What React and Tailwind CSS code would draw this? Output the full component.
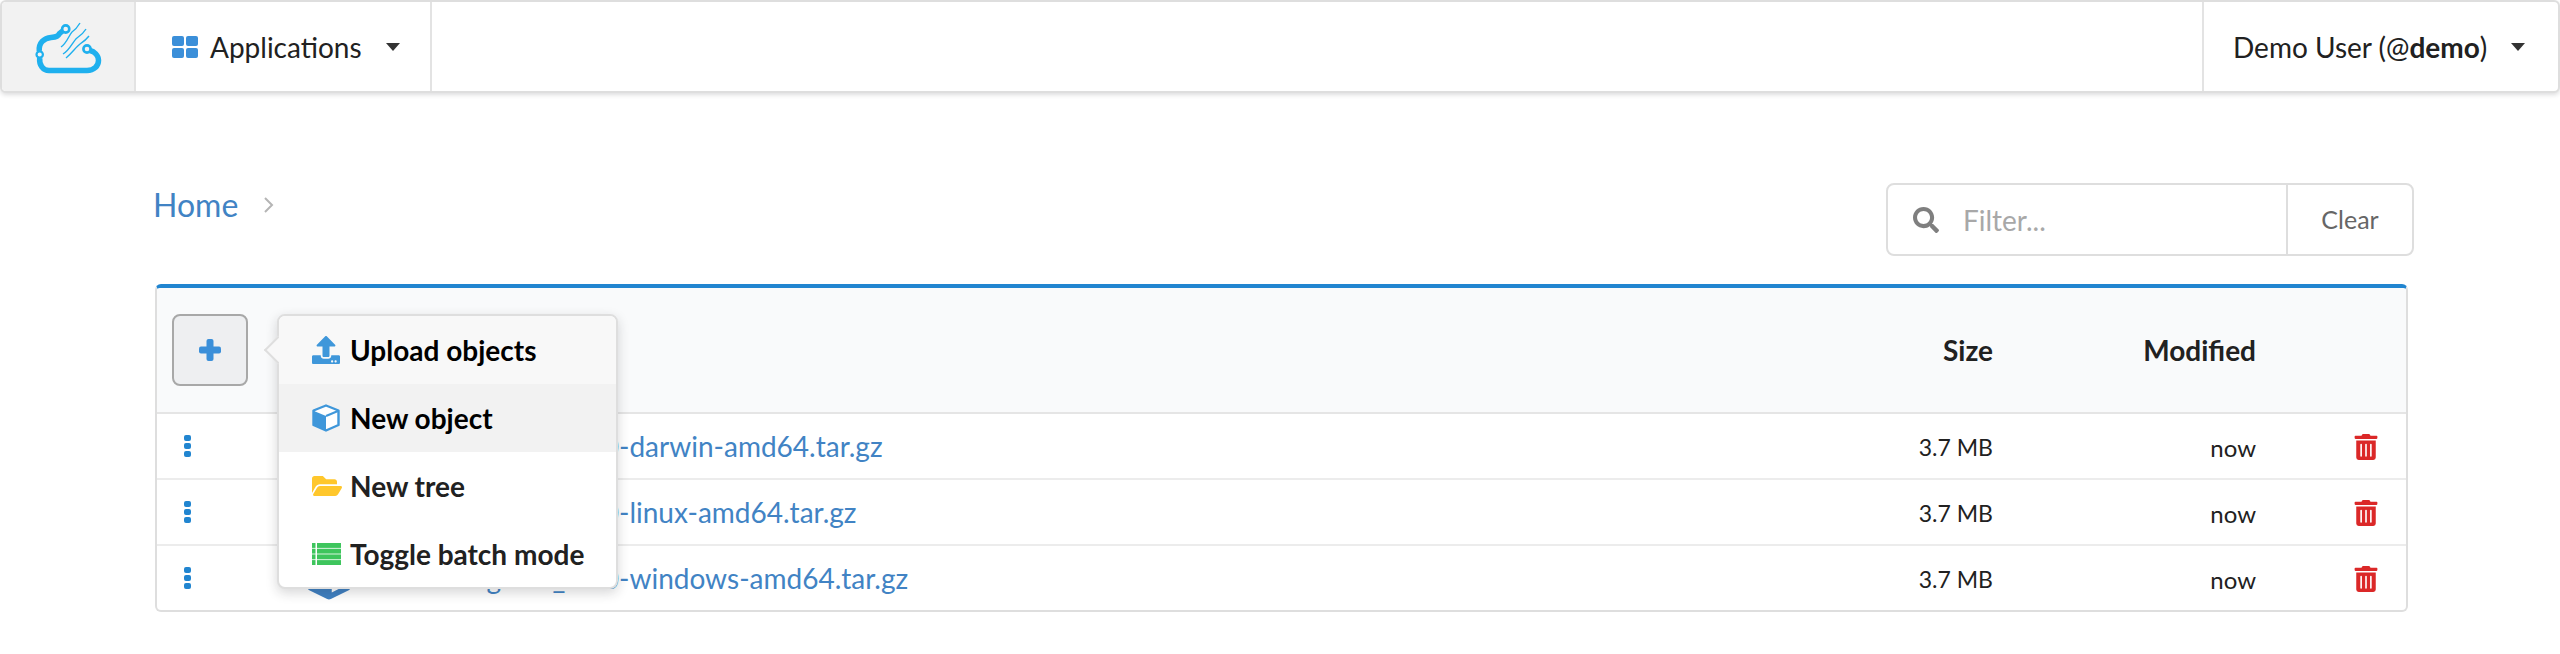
import React from "react";
import { FaSearch, FaTrashAlt, FaUpload, FaCube, FaFolderOpen } from "react-icons/fa";

const files = ["darwin", "linux", "windows"];

const Caret = ({ className }) => (
  <svg viewBox="0 0 14 8" className={className} fill="#333">
    <path d="M0 0h14L7 8z" />
  </svg>
);

const CloudLogo = () => (
  <svg viewBox="34 18 70 56" className="w-[70px] h-[56px]" fill="none" stroke="#1fb0ee">
    <path strokeWidth="5.5" d="M40.7 57C40 64 44 69.5 50 69.5H88C95 69.5 99.5 65 99.5 59.5C99.5 54 95 50.5 91 49.5" />
    <path strokeWidth="5.5" d="M40.3 50C39.5 42 45 37 52 36.5C58 36 59 35 60.5 32.5L63.5 30" />
    <circle cx="40.7" cy="53.5" r="3.2" strokeWidth="2.2" fill="#f2f2f2" />
    <circle cx="66.7" cy="28" r="3.6" strokeWidth="2.6" fill="#f2f2f2" />
    <circle cx="88" cy="48" r="3.6" strokeWidth="2.6" fill="#f2f2f2" />
    <path strokeWidth="1.4" d="M81 22C78 27 76 29 73 31C70 34 68 42 62 46" />
    <path strokeWidth="1.4" d="M87 28C84 33 81 35 78 37C74 40 71 49 64 53" />
    <path strokeWidth="1.4" d="M90 35C87 39 84 41 81 43C77 46 73 52 67 57" />
  </svg>
);

const GridIcon = () => (
  <svg viewBox="0 0 26 22" className="w-[26px] h-[22px] mr-[12px]" fill="#3b8fd9">
    <rect x="0" y="0" width="12" height="10" rx="2" />
    <rect x="14" y="0" width="12" height="10" rx="2" />
    <rect x="0" y="12" width="12" height="10" rx="2" />
    <rect x="14" y="12" width="12" height="10" rx="2" />
  </svg>
);

const PlusIcon = () => (
  <svg viewBox="0 0 22 22" className="w-[22px] h-[22px]" fill="#3b8fd9">
    <rect x="7.5" y="0" width="7" height="22" rx="2" />
    <rect x="0" y="7.5" width="22" height="7" rx="2" />
  </svg>
);

const BatchIcon = () => (
  <svg viewBox="0 0 29 22" className="w-[29px] h-[22px]" fill="#3ec55d">
    {[0, 5.7, 11.4, 17.1].map((y) => (
      <g key={y}>
        <rect x="0" y={y} width="3.5" height="4.9" />
        <rect x="5" y={y} width="24" height="4.9" />
      </g>
    ))}
  </svg>
);

const CubeIcon = () => (
  <svg viewBox="0 0 28 28" className="w-[28px] h-[28px]">
    <path d="M14 1.5L26.5 6.5V21L14 26.5L1.5 21V6.5Z" fill="#fff" stroke="#3f97da" strokeWidth="2.4" strokeLinejoin="round" />
    <path d="M2 7L14 12V26L2 21Z" fill="#3f97da" />
    <path d="M14 12L26 7" stroke="#3f97da" strokeWidth="2" />
  </svg>
);

const DotsIcon = () => (
  <svg viewBox="0 0 7 22" className="w-[7px] h-[22px]" fill="#2185d0">
    <rect y="0" width="7" height="6" rx="2" />
    <rect y="8" width="7" height="6" rx="2" />
    <rect y="16" width="7" height="6" rx="2" />
  </svg>
);

const MenuItem = ({ icon, label, className }) => (
  <div className={`h-[68px] flex items-center pl-[33px] text-[28px] font-bold ${className}`}>
    <span className="w-[38px] shrink-0 flex items-center">{icon}</span>
    {label}
  </div>
);

export default function App() {
  return (
    <div className="min-h-[654px] bg-white font-[Lato,sans-serif] text-[#212121]">
      {/* top bar */}
      <div className="h-[93px] flex border-2 border-[#dedede] rounded-[6px] bg-white text-[28px] shadow-[0_2px_4px_rgba(34,36,38,0.15)]">
        <div className="w-[134px] bg-[#f2f2f2] rounded-l-[4px] flex items-center justify-center border-r-2 border-[#e3e3e3]">
          <CloudLogo />
        </div>
        <div className="w-[296px] flex items-center pl-[36px] border-r-2 border-[#e3e3e3]">
          <GridIcon />
          <span>Applications</span>
          <Caret className="w-[14px] h-[8px] ml-[24px]" />
        </div>
        <div className="flex-1" />
        <div className="w-[356px] flex items-center pl-[29px] border-l-2 border-[#e3e3e3]">
          <span>
            Demo User (@<b>demo</b>)
          </span>
          <Caret className="w-[14px] h-[8px] ml-[24px]" />
        </div>
      </div>

      {/* breadcrumb + filter */}
      <div className="pl-[153px] pr-[146px] pt-[90px] flex justify-between items-start">
        <div className="flex items-center h-[44px] text-[32px] text-[#4183c4]">
          Home
          <svg viewBox="0 0 10 16" className="w-[10px] h-[16px] ml-[26px]" fill="none" stroke="#b5b5b5" strokeWidth="2">
            <path d="M1 1l7 7-7 7" />
          </svg>
        </div>
        <div className="w-[528px] h-[73px] flex border-2 border-[#dedede] rounded-[8px]">
          <div className="flex-1 flex items-center pl-[25px] text-[28px] text-[#a8a8a8]">
            <FaSearch className="text-[#7f7f7f] text-[26px] mr-[24px]" />
            Filter...
          </div>
          <div className="w-[126px] flex items-center justify-center border-l-2 border-[#dedede] text-[25px] text-[#666]">
            Clear
          </div>
        </div>
      </div>

      {/* object table */}
      <div className="relative ml-[155px] mt-[28px] w-[2253px] border-2 border-t-4 border-[#dedede] border-t-[#2185d0] rounded-[6px] bg-white">
        <div className="h-[126px] flex items-center bg-[#f9fafb] rounded-t-[4px] border-b-2 border-[#e5e5e5] text-[28px] font-bold">
          <div className="w-[100px] pl-[15px] shrink-0">
            <div className="w-[76px] h-[72px] flex items-center justify-center bg-[#eeeff1] border-2 border-[#a8a8a8] rounded-[8px]">
              <PlusIcon />
            </div>
          </div>
          <div className="flex-1" />
          <div className="w-[200px] text-right">Size</div>
          <div className="w-[263px] text-right">Modified</div>
          <div className="w-[150px]" />
        </div>

        {files.map((os, i) => (
          <div key={os} className={`flex items-center ${i < 2 ? "h-[66px] border-b-2 border-[#ececec]" : "h-[64px]"}`}>
            <div className="w-[150px] shrink-0 pl-[27px]">
              <DotsIcon />
            </div>
            <FaCube className="text-[#3f80c2] text-[44px] shrink-0" />
            <a className="flex-1 -ml-[4px] text-[28px] text-[#4183c4]">cloud-storage-cli_v1.0-{os}-amd64.tar.gz</a>
            <div className="w-[200px] text-right text-[23px] pt-[3px]">3.7 MB</div>
            <div className="w-[263px] text-right text-[24px] pt-[3px]">now</div>
            <div className="w-[150px] flex justify-end pr-[27px] pt-[2px]">
              <FaTrashAlt className="text-[#db2828] text-[26px]" />
            </div>
          </div>
        ))}

        {/* add menu popup */}
        <div className="absolute left-[120px] top-[26px] w-[341px] h-[275px] bg-white border-2 border-[#dedede] rounded-[8px] shadow-[0_4px_12px_rgba(34,36,38,0.18)]">
          <div className="absolute -left-[11px] top-[24px] w-[20px] h-[20px] rotate-45 bg-[#f8f8f8] border-l-2 border-b-2 border-[#dedede]" />
          <div className="relative">
            <MenuItem icon={<FaUpload className="text-[#3f97da] text-[28px]" />} label="Upload objects" className="bg-[#f8f8f8] rounded-t-[6px] text-black" />
            <MenuItem icon={<CubeIcon />} label="New object" className="bg-[#f2f2f2] text-black" />
            <MenuItem icon={<FaFolderOpen className="text-[#ffc72c] text-[30px]" />} label="New tree" />
            <MenuItem icon={<BatchIcon />} label="Toggle batch mode" />
          </div>
        </div>
      </div>
    </div>
  );
}
